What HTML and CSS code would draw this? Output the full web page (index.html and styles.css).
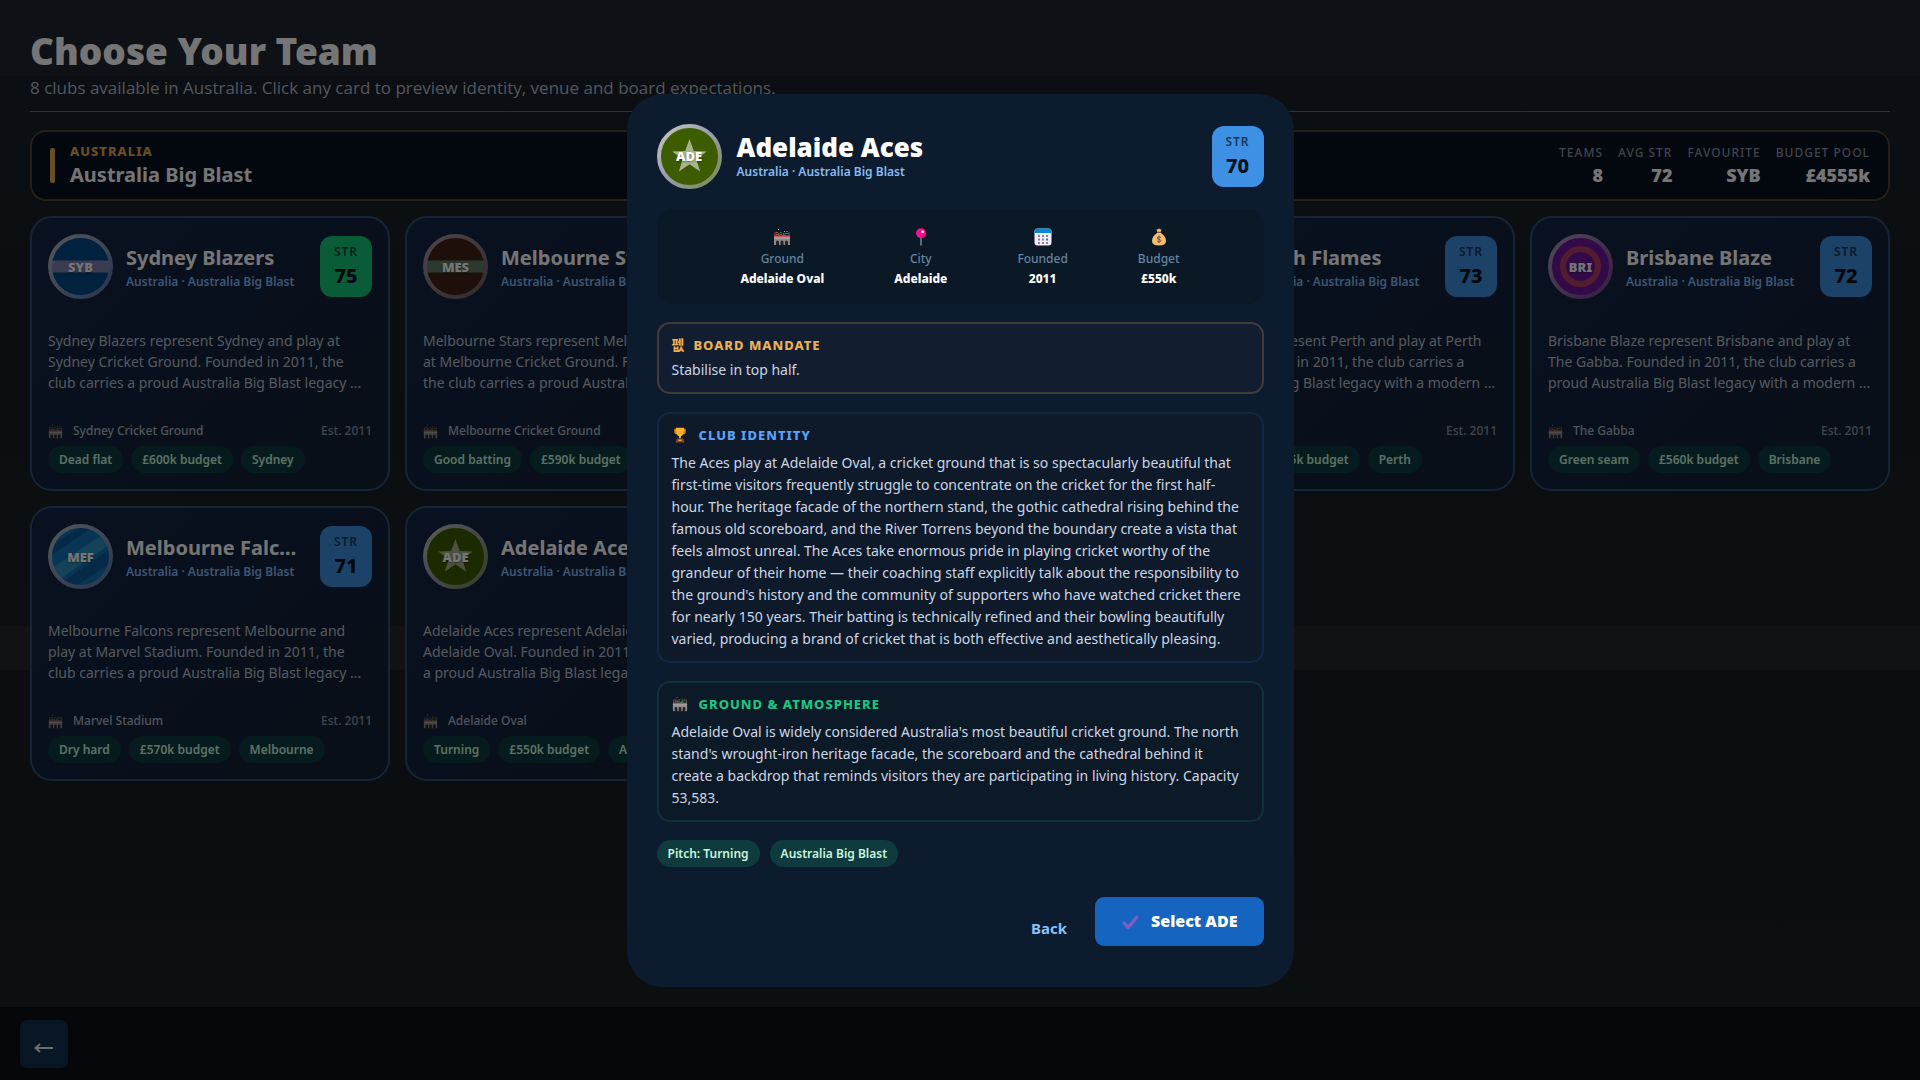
FILE: index.html
```html
<!DOCTYPE html>
<html lang="en">
<head>
<meta charset="utf-8">
<title>Choose Your Team</title>
<link rel="stylesheet" href="styles.css">
</head>
<body>
<svg class="defs" aria-hidden="true">
  <defs>
    <linearGradient id="ring-green" x1="0" y1="0" x2="1" y2="1"><stop offset="0" stop-color="#c3cdb4"/><stop offset=".45" stop-color="#9a9cb4"/><stop offset="1" stop-color="#758b4c"/></linearGradient>
    <linearGradient id="ring-blue" x1="0" y1="0" x2="1" y2="1"><stop offset="0" stop-color="#b4bcc8"/><stop offset="1" stop-color="#5a74a8"/></linearGradient>
    <linearGradient id="ring-brown" x1="0" y1="0" x2="1" y2="1"><stop offset="0" stop-color="#a09ca8"/><stop offset="1" stop-color="#6e5a5c"/></linearGradient>
    <linearGradient id="ring-purple" x1="0" y1="0" x2="1" y2="1"><stop offset="0" stop-color="#b49cc0"/><stop offset="1" stop-color="#74408f"/></linearGradient>
    <symbol id="stadium" viewBox="0 0 18 18">
      <path d="M1 8.500h16V17H1z" fill="#8b8889"/>
      <path d="M1 7.500h16v1.800H1z" fill="#c9595c"/>
      <path d="M1 9.500h16v1H1z" fill="#b5b2b1"/>
      <path d="M3 17v-3a1.500 1.500 0 0 1 3 0v3zM7.500 17v-3a1.500 1.500 0 0 1 3 0v3zM12 17v-3a1.500 1.500 0 0 1 3 0v3z" fill="#242326"/>
      <path d="M2 4v4M6 5v3M12 5v3M16 4v4" stroke="#6c6668" stroke-width="1"/>
      <path d="M3 4h2v1H3zM7 6h2v1H7zM13 3h2v1h-2zM10 5h1v2h-1zM3 6h2v1H3z" fill="#d3383c"/>
      <path d="M7 4h2v1H7zM12 5h3v1h-3zM5 5h1v2H5zM9 7h3v1H9z" fill="#238b45"/>
      <path d="M5 1h1v1H5zM11 3h1v1h-1z" fill="#c99a32"/>
    </symbol>
    <symbol id="pin" viewBox="0 0 18 18">
      <path d="M8.300 9h1.400v8.500H8.300z" fill="#8d8a90"/><circle cx="9" cy="5.300" r="5" fill="#fb0b8d"/><circle cx="10.600" cy="3.700" r="1.300" fill="#fff"/>
    </symbol>
    <symbol id="calendar" viewBox="0 0 18 18">
      <rect x=".5" y=".5" width="17" height="17" rx="3" fill="#f1ecf8"/><path d="M.5 5V3.500a3 3 0 0 1 3-3h11a3 3 0 0 1 3 3V5z" fill="#0787d6"/>
      <path d="M4 7h2v2H4zm4 0h2v2H8zm4 0h2v2h-2zm-8 3.500h2v2H4zm4 0h2v2H8zM4 14h2v2H4zm4 0h2v2H8zm4 0h2v2h-2z" fill="#8c8398"/><path d="M12 10.500h2v2h-2z" fill="#0787d6"/>
    </symbol>
    <symbol id="bag" viewBox="0 0 18 18">
      <path d="M6.500 1l1.500.6L9 .3l1 1.300 1.500-.6L10.700 4H7.300z" fill="#f3be73"/><path d="M7 5h4c3 2 5 4.700 5 7.800 0 3-2 4.700-7 4.700s-7-1.700-7-4.700C2 9.700 4 7 7 5z" fill="#f3be73"/><path d="M7 3.700h4V5H7z" fill="#88522f"/>
      <path d="M11 9.700c-.7-1.500-3.800-1.200-3.800.3 0 1.700 3.700 1 3.700 2.700 0 1.600-3.200 1.700-3.900.1M9 7.500v7.500" fill="none" stroke="#7d4f3a" stroke-width="1"/>
    </symbol>
    <symbol id="trophy" viewBox="0 0 14 14">
      <path d="M2 1.500h10v2.800c0 1.300-1.200 2-2.600 2H4.600C3.200 6.300 2 5.600 2 4.300z" fill="#d98a16"/><path d="M3.500.7h7V4c0 2.500-1.500 3.800-2.700 4.200V10H6.200V8.200C5 7.800 3.500 6.500 3.500 4z" fill="#ffae2a"/>
      <path d="M4.200 10h5.600l1.200 3.600H3z" fill="#7b4430"/><path d="M5.500 11h3v1.300h-3z" fill="#f3a32b"/>
    </symbol>
    <symbol id="check" viewBox="0 0 18 18"><path d="M3 10.500l3.800 4L15 5" fill="none" stroke="#7f5bc6" stroke-width="3.200" stroke-linecap="round" stroke-linejoin="round"/></symbol>
    <symbol id="crest-ade" viewBox="0 0 65 65">
      <circle cx="32.500" cy="32.500" r="30.500" fill="#3d5c00" stroke="url(#ring-green)" stroke-width="4"/>
      <path d="M32.500 15l4.300 12.100 12.900.3-10.300 7.800 3.700 12.400-10.600-7.400-10.600 7.400 3.700-12.400-10.300-7.800 12.900-.3z" fill="#a8b48b"/>
    </symbol>
  </defs>
</svg>

<div class="page">
  <main class="content">
    <header class="heading">
      <h1>Choose Your Team</h1>
      <p>8 clubs available in Australia. Click any card to preview identity, venue and board expectations.</p>
    </header>

    <section class="league">
      <span class="league-bar"></span>
      <div class="league-name">
        <span class="league-country">AUSTRALIA</span>
        <h2>Australia Big Blast</h2>
      </div>
      <dl class="stats">
        <div><dt>TEAMS</dt><dd>8</dd></div>
        <div><dt>AVG STR</dt><dd>72</dd></div>
        <div><dt>FAVOURITE</dt><dd>SYB</dd></div>
        <div><dt>BUDGET POOL</dt><dd>£4555k</dd></div>
      </dl>
    </section>

    <div class="cards">
      <article class="card">
        <div class="team">
          <span class="crest"><svg viewBox="0 0 65 65"><circle cx="32.500" cy="32.500" r="30.500" fill="#004a88"/><path d="M2 26.500h61v12H2z" fill="#7f83b4"/><circle cx="32.500" cy="32.500" r="30.500" fill="none" stroke="url(#ring-blue)" stroke-width="4"/></svg><b>SYB</b></span>
          <div class="team-text"><h3>Sydney Blazers</h3><p>Australia · Australia Big Blast</p></div>
          <div class="str top"><span>STR</span><strong>75</strong></div>
        </div>
        <p class="about">Sydney Blazers represent Sydney and play at Sydney Cricket Ground. Founded in 2011, the club carries a proud Australia Big Blast legacy ...</p>
        <div class="venue"><svg><use href="#stadium"/></svg><span>Sydney Cricket Ground</span><span class="est">Est. 2011</span></div>
        <div class="tags"><span>Dead flat</span><span>£600k budget</span><span>Sydney</span></div>
      </article>

      <article class="card">
        <div class="team">
          <span class="crest"><svg viewBox="0 0 65 65"><circle cx="32.500" cy="32.500" r="30.500" fill="#452216"/><path d="M2 26.500h61v12H2z" fill="#617d69"/><circle cx="32.500" cy="32.500" r="30.500" fill="none" stroke="url(#ring-brown)" stroke-width="4"/></svg><b>MES</b></span>
          <div class="team-text"><h3>Melbourne Stars</h3><p>Australia · Australia Big Blast</p></div>
          <div class="str"><span>STR</span><strong>74</strong></div>
        </div>
        <p class="about">Melbourne Stars represent Melbourne and play at Melbourne Cricket Ground. Founded in 2011, the club carries a proud Australia Big Blast ...</p>
        <div class="venue"><svg><use href="#stadium"/></svg><span>Melbourne Cricket Ground</span><span class="est">Est. 2011</span></div>
        <div class="tags"><span>Good batting</span><span>£590k budget</span></div>
      </article>

      <article class="card fourth">
        <div class="team">
          <span class="crest"></span>
          <div class="team-text"><h3>Perth Flames</h3><p>Australia · Australia Big Blast</p></div>
          <div class="str"><span>STR</span><strong>73</strong></div>
        </div>
        <p class="about">Perth Flames represent Perth and play at Perth Stadium. Founded in 2011, the club carries a proud Australia Big Blast legacy with a modern ...</p>
        <div class="venue"><svg><use href="#stadium"/></svg><span>Perth Stadium</span><span class="est">Est. 2011</span></div>
        <div class="tags"><span>Fast pace</span><span>£575k budget</span><span>Perth</span></div>
      </article>

      <article class="card">
        <div class="team">
          <span class="crest"><svg viewBox="0 0 65 65"><circle cx="32.500" cy="32.500" r="30.500" fill="#6c169c" stroke="url(#ring-purple)" stroke-width="4"/><circle cx="32.500" cy="32.500" r="17.500" fill="none" stroke="#b83f68" stroke-width="6"/></svg><b>BRI</b></span>
          <div class="team-text"><h3>Brisbane Blaze</h3><p>Australia · Australia Big Blast</p></div>
          <div class="str"><span>STR</span><strong>72</strong></div>
        </div>
        <p class="about">Brisbane Blaze represent Brisbane and play at The Gabba. Founded in 2011, the club carries a proud Australia Big Blast legacy with a modern ...</p>
        <div class="venue"><svg><use href="#stadium"/></svg><span>The Gabba</span><span class="est">Est. 2011</span></div>
        <div class="tags"><span>Green seam</span><span>£560k budget</span><span>Brisbane</span></div>
      </article>

      <article class="card">
        <div class="team">
          <span class="crest"><svg viewBox="0 0 65 65"><circle cx="32.500" cy="32.500" r="30.500" fill="#1273b8"/><path d="M5 21L34 2l10 2L2 32zM14 58L62 25l1 14L26 63z" fill="#0d5c9c"/><path d="M4 44L54 11l7 10L12 55z" fill="#2c92c0"/><circle cx="32.500" cy="32.500" r="30.500" fill="none" stroke="url(#ring-blue)" stroke-width="4"/></svg><b>MEF</b></span>
          <div class="team-text"><h3>Melbourne Falcons</h3><p>Australia · Australia Big Blast</p></div>
          <div class="str"><span>STR</span><strong>71</strong></div>
        </div>
        <p class="about">Melbourne Falcons represent Melbourne and play at Marvel Stadium. Founded in 2011, the club carries a proud Australia Big Blast legacy ...</p>
        <div class="venue"><svg><use href="#stadium"/></svg><span>Marvel Stadium</span><span class="est">Est. 2011</span></div>
        <div class="tags"><span>Dry hard</span><span>£570k budget</span><span>Melbourne</span></div>
      </article>

      <article class="card">
        <div class="team">
          <span class="crest"><svg><use href="#crest-ade"/></svg><b>ADE</b></span>
          <div class="team-text"><h3>Adelaide Aces</h3><p>Australia · Australia Big Blast</p></div>
          <div class="str"><span>STR</span><strong>70</strong></div>
        </div>
        <p class="about">Adelaide Aces represent Adelaide and play at Adelaide Oval. Founded in 2011, the club carries a proud Australia Big Blast legacy with a ...</p>
        <div class="venue"><svg><use href="#stadium"/></svg><span>Adelaide Oval</span><span class="est">Est. 2011</span></div>
        <div class="tags"><span>Turning</span><span>£550k budget</span><span>Adelaide</span></div>
      </article>
    </div>
  </main>

  <footer class="footer"><button class="return" type="button" aria-label="Go back"><svg viewBox="0 0 20 12"><path d="M19 6H1.500M6 2L1.500 6 6 10" fill="none" stroke="currentColor" stroke-width="2"/></svg></button></footer>
</div>

<div class="backdrop">
  <section class="modal" role="dialog" aria-modal="true" aria-labelledby="modal-title">
    <div class="team">
      <span class="crest"><svg><use href="#crest-ade"/></svg><b>ADE</b></span>
      <div class="team-text"><h2 id="modal-title">Adelaide Aces</h2><p>Australia · Australia Big Blast</p></div>
      <div class="str"><span>STR</span><strong>70</strong></div>
    </div>

    <dl class="facts">
      <div><svg><use href="#stadium"/></svg><dt>Ground</dt><dd>Adelaide Oval</dd></div>
      <div><svg><use href="#pin"/></svg><dt>City</dt><dd>Adelaide</dd></div>
      <div><svg><use href="#calendar"/></svg><dt>Founded</dt><dd>2011</dd></div>
      <div><svg><use href="#bag"/></svg><dt>Budget</dt><dd>£550k</dd></div>
    </dl>

    <section class="panel board">
      <h3><span class="glyph">펪</span>BOARD MANDATE</h3>
      <p>Stabilise in top half.</p>
    </section>
    <section class="panel identity">
      <h3><svg><use href="#trophy"/></svg>CLUB IDENTITY</h3>
      <p>The Aces play at Adelaide Oval, a cricket ground that is so spectacularly beautiful that first-time visitors frequently struggle to concentrate on the cricket for the first half-hour. The heritage facade of the northern stand, the gothic cathedral rising behind the famous old scoreboard, and the River Torrens beyond the boundary create a vista that feels almost unreal. The Aces take enormous pride in playing cricket worthy of the grandeur of their home — their coaching staff explicitly talk about the responsibility to the ground's history and the community of supporters who have watched cricket there for nearly 150 years. Their batting is technically refined and their bowling beautifully varied, producing a brand of cricket that is both effective and aesthetically pleasing.</p>
    </section>
    <section class="panel ground">
      <h3><svg><use href="#stadium"/></svg>GROUND &amp; ATMOSPHERE</h3>
      <p>Adelaide Oval is widely considered Australia's most beautiful cricket ground. The north stand's wrought-iron heritage facade, the scoreboard and the cathedral behind it create a backdrop that reminds visitors they are participating in living history. Capacity 53,583.</p>
    </section>

    <div class="tags"><span>Pitch: Turning</span><span>Australia Big Blast</span></div>

    <div class="actions">
      <button class="back" type="button">Back</button>
      <button class="select" type="button"><svg><use href="#check"/></svg>Select ADE</button>
    </div>
  </section>
</div>
</body>
</html>
```
FILE: styles.css
```css
* { box-sizing: border-box; margin: 0; }

body {
  font-family: "Noto Sans", "Noto Sans CJK KR", sans-serif;
  color: #fff;
  background: #19212a;
}

.defs { position: absolute; width: 0; height: 0; }

.page {
  min-height: 100vh;
  display: flex;
  flex-direction: column;
  background: linear-gradient(#20282e 0, #20272e 7%, #1a2028 7%, #1b2127 58%, #23282d 58%, #23282d 62%, #191e24 62%, #192023 78%, #1a2224 100%);
}

.content { flex: 1; padding: 30px 30px 0; }

/* Heading */
.heading { padding-bottom: 11px; border-bottom: 1px solid #63676d; }
.heading h1 { font-size: 37px; font-weight: 900; line-height: 42px; }
.heading p { margin-top: 4px; font-family: "Open Sans", sans-serif; font-size: 17px; line-height: 24px; color: #b2bcc8; }

/* League banner */
.league {
  display: flex;
  align-items: center;
  gap: 15px;
  margin: 18px 0 15px;
  padding: 10px 18px;
  border: 2px solid #4f4433;
  border-radius: 16px;
  background: #081020;
}
.league-bar { width: 5px; height: 35px; border-radius: 2px; background: #e5ac4f; }
.league-name { flex: 1; }
.league-country { display: block; font-size: 13px; font-weight: 800; line-height: 18px; letter-spacing: 1px; color: #e5ac4f; }
.league h2 { font-size: 20px; font-weight: 700; line-height: 29px; }
.stats { display: flex; gap: 15px; text-align: right; }
.stats dt { font-size: 12px; font-weight: 500; line-height: 18px; letter-spacing: 1px; color: #8b95a5; }
.stats dd { font-size: 18px; font-weight: 900; line-height: 26px; }

/* Team cards */
.cards { display: grid; grid-template-columns: repeat(5, 1fr); gap: 15px; }
.card {
  min-width: 0;
  padding: 16px;
  border: 2px solid #305073;
  border-radius: 22px;
  background: linear-gradient(135deg, #142446, #132134);
}
.card.fourth { grid-column: 4; }

.team { display: flex; align-items: center; gap: 13px; }
.team-text { flex: 1; min-width: 0; }
.team-text h3 { font-size: 20px; font-weight: 700; line-height: 30px; overflow: hidden; white-space: nowrap; text-overflow: ellipsis; }
.team-text p { font-size: 12px; font-weight: 600; line-height: 18px; white-space: nowrap; color: #86bbf4; }

.crest { flex: none; display: grid; width: 65px; height: 65px; place-items: center; }
.crest > * { grid-area: 1 / 1; }
.crest svg { width: 65px; height: 65px; }
.crest b { font-size: 13px; font-weight: 900; text-shadow: 0 1px 2px #0006; }

.str {
  flex: none;
  display: flex;
  flex-direction: column;
  align-items: center;
  width: 52px;
  height: 61px;
  padding-top: 6px;
  border-radius: 12px;
  background: #3d90e3;
  color: #07121e;
}
.str.top { background: #17c678; }
.str span { font-size: 12px; font-weight: 600; line-height: 20px; letter-spacing: 1px; opacity: .7; }
.str strong { font-size: 20px; font-weight: 800; line-height: 28px; }

.about { margin-top: 31px; font-size: 14px; line-height: 21px; color: #b8c1cd; }
.venue { display: flex; align-items: center; gap: 10px; margin-top: 28px; font-size: 12px; font-weight: 500; line-height: 20px; color: #afb9c8; }
.venue svg { width: 15px; height: 15px; }
.venue .est { margin-left: auto; color: #8d99ac; }
.tags { display: flex; gap: 8px; margin-top: 5px; }
.tags span { padding: 0 11px; border-radius: 14px; background: #0f3b3f; font-size: 12px; font-weight: 600; line-height: 27px; white-space: nowrap; color: #c8f5dc; }

/* Footer */
.footer { padding: 13px 20px 12px; background: #0b111a; }
.return { display: grid; width: 48px; height: 48px; place-items: center; padding: 8px 0 0; border: 0; border-radius: 7px; background: #15304f; color: #e8e8e8; }
.return svg { width: 20px; height: 12px; }

/* Team dialog */
.backdrop { position: fixed; inset: 0; z-index: 1; display: grid; place-items: center; background: rgba(0, 0, 0, .54); overflow: auto; }
.modal {
  display: flex;
  flex-direction: column;
  gap: 18px;
  width: 667px;
  max-width: 94vw;
  padding: 30px 30px 41px;
  border-radius: 36px;
  background: #0c1b2e;
}
.modal .team { gap: 15px; margin-bottom: 2px; }
.modal .team-text h2 { font-size: 26px; font-weight: 900; line-height: 32px; }

.facts { display: flex; justify-content: center; gap: 70px; padding: 16px 16px 15px; border-radius: 16px; background: #0b1826; text-align: center; }
.facts div { display: grid; justify-items: center; grid-template-rows: 24px 20px 20px; align-items: center; }
.facts svg { width: 18px; height: 18px; }
.facts dt { font-size: 12px; font-weight: 500; line-height: 20px; color: #64849f; }
.facts dd { font-size: 12px; font-weight: 800; line-height: 20px; }

.panel { padding: 11px 18px 11px 13px; border: 2px solid; border-radius: 13px; }
.panel h3 { display: flex; align-items: center; gap: 11px; margin-bottom: 7px; font-size: 13px; font-weight: 800; line-height: 20px; letter-spacing: 1px; }
.panel svg { width: 16px; height: 16px; }
.panel p { font-size: 14px; line-height: 22px; color: #ccd6e5; }
.board { border-color: #403d38; background: #121e30; }
.board h3 { gap: 8px; margin-bottom: 4px; color: #ebb055; }
.glyph { font-size: 14px; font-weight: 700; }
.identity { border-color: #132542; background: #0e1a2a; }
.identity h3 { color: #5ba3fa; }
.ground { border-color: #0d3238; background: #0c1927; }
.ground h3 { color: #1cc581; }

.modal .tags { gap: 10px; margin: 0; }
.actions { display: flex; justify-content: flex-end; align-items: flex-end; gap: 16px; margin-top: 12px; }
.actions button { border: 0; font: inherit; font-weight: 700; cursor: pointer; }
.actions .back { padding: 0 12px; background: none; font-size: 15px; line-height: 35px; color: #86c0fb; }
.actions .select { display: flex; align-items: center; gap: 11px; padding: 0 26px; border-radius: 9px; background: #1565c0; color: #fff; font-size: 16px; font-weight: 900; line-height: 49px; }
.select svg { width: 19px; height: 19px; }
```
